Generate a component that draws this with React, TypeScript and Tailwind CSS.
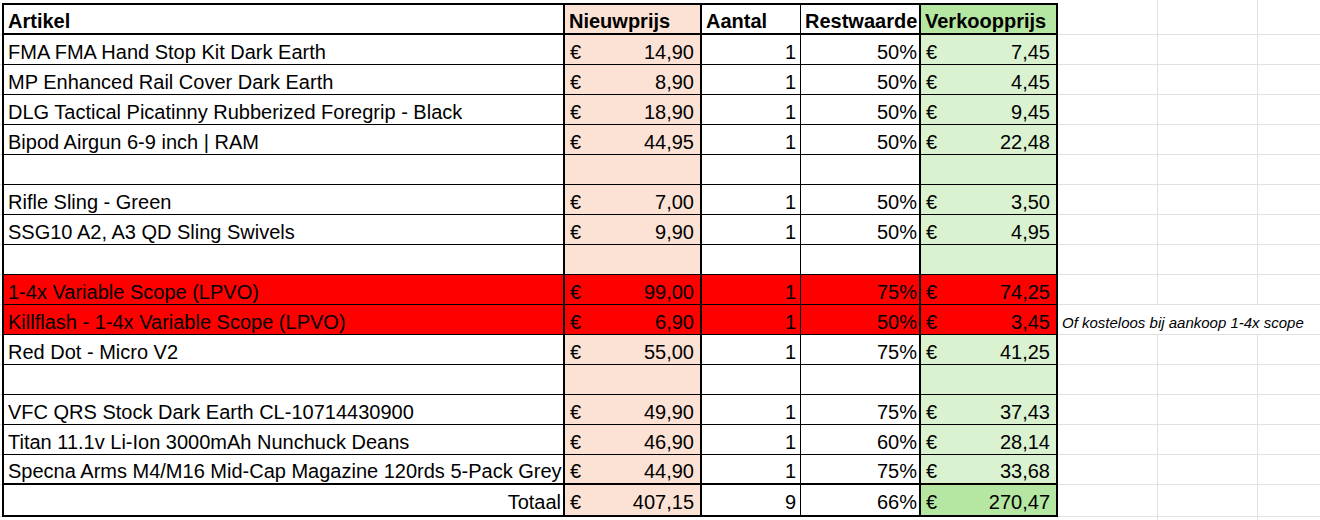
type Item = {
  name: string;
  price?: string;
  qty?: string;
  pct?: string;
  sale?: string;
  red?: boolean;
  note?: string;
};

const items: Item[] = [
  { name: 'FMA FMA Hand Stop Kit Dark Earth', price: '14,90', qty: '1', pct: '50%', sale: '7,45' },
  { name: 'MP Enhanced Rail Cover Dark Earth', price: '8,90', qty: '1', pct: '50%', sale: '4,45' },
  { name: 'DLG Tactical Picatinny Rubberized Foregrip - Black', price: '18,90', qty: '1', pct: '50%', sale: '9,45' },
  { name: 'Bipod Airgun 6-9 inch | RAM', price: '44,95', qty: '1', pct: '50%', sale: '22,48' },
  { name: '' },
  { name: 'Rifle Sling - Green', price: '7,00', qty: '1', pct: '50%', sale: '3,50' },
  { name: 'SSG10 A2, A3 QD Sling Swivels', price: '9,90', qty: '1', pct: '50%', sale: '4,95' },
  { name: '' },
  { name: '1-4x Variable Scope (LPVO)', price: '99,00', qty: '1', pct: '75%', sale: '74,25', red: true },
  {
    name: 'Killflash - 1-4x Variable Scope (LPVO)',
    price: '6,90',
    qty: '1',
    pct: '50%',
    sale: '3,45',
    red: true,
    note: 'Of kosteloos bij aankoop 1-4x scope',
  },
  { name: 'Red Dot - Micro V2', price: '55,00', qty: '1', pct: '75%', sale: '41,25' },
  { name: '' },
  { name: 'VFC QRS Stock Dark Earth CL-10714430900', price: '49,90', qty: '1', pct: '75%', sale: '37,43' },
  { name: 'Titan 11.1v Li-Ion 3000mAh Nunchuck Deans', price: '46,90', qty: '1', pct: '60%', sale: '28,14' },
  { name: 'Specna Arms M4/M16 Mid-Cap Magazine 120rds 5-Pack Grey', price: '44,90', qty: '1', pct: '75%', sale: '33,68' },
];

// excel gridline cells to the right of the table
function Grid({ note }: { note?: string }) {
  return (
    <>
      <div className="relative z-10 flex w-[100px] shrink-0 items-stretch overflow-visible border-b border-r border-[#e1e1e1]">
        {note && (
          <span className="flex items-center whitespace-nowrap bg-white pl-[4px] pr-[8px] pt-[5px] text-[15px] italic">
            {note}
          </span>
        )}
      </div>
      <div className="w-[100px] shrink-0 border-b border-r border-[#e1e1e1]" />
      <div className="flex-1 border-b border-[#e1e1e1]" />
    </>
  );
}

function Money({ v, bg, edge }: { v?: string; bg: string; edge: string }) {
  return (
    <div className={`flex w-[137px] shrink-0 items-center justify-between border-r-2 border-black pl-[5px] pr-[6px] pt-[4px] ${edge} ${bg}`}>
      {v && <span>€</span>}
      {v && <span>{v}</span>}
    </div>
  );
}

export default function App() {
  return (
    <div className="h-[520px] w-[1320px] overflow-hidden bg-white font-['Liberation_Sans',Arial,sans-serif] text-[20px] leading-none text-black">
      {/* strip above the table */}
      <div className="flex h-[3px]">
        <div className="w-[1058px] shrink-0" />
        <div className="w-[100px] shrink-0 border-r border-[#e1e1e1]" />
        <div className="w-[100px] shrink-0 border-r border-[#e1e1e1]" />
      </div>

      {/* header */}
      <div className="flex h-[32px] font-bold">
        <div className="w-[2px] shrink-0 border-b border-[#e1e1e1]" />
        <div className="flex w-[563px] shrink-0 items-center border-x-2 border-y-2 border-black pl-[4px] pt-[3px]">Artikel</div>
        <div className="flex w-[137px] shrink-0 items-center border-y-2 border-r-2 border-black bg-[#fbe2d5] pl-[4px] pt-[3px]">Nieuwprijs</div>
        <div className="flex w-[99px] shrink-0 items-center border-y-2 border-r border-black pl-[4px] pt-[3px]">Aantal</div>
        <div className="flex w-[120px] shrink-0 items-center border-y-2 border-r-2 border-black pl-[4px] pt-[3px]">Restwaarde</div>
        <div className="flex w-[137px] shrink-0 items-center border-y-2 border-r-2 border-black bg-[#b5e6a2] pl-[4px] pt-[3px]">Verkoopprijs</div>
        <Grid />
      </div>

      {items.map((it, i) => {
        const last = i === items.length - 1;
        const edge = last ? 'border-b-2' : 'border-b';
        const red = it.red ? 'bg-[#ff0000]' : '';
        return (
          <div key={i} className="flex h-[30px]">
            <div className="w-[2px] shrink-0 border-b border-[#e1e1e1]" />
            <div className={`flex w-[563px] shrink-0 items-center whitespace-nowrap border-x-2 border-black pl-[4px] pt-[4px] ${edge} ${red}`}>
              {it.name}
            </div>
            <Money v={it.price} edge={edge} bg={it.red ? 'bg-[#ff0000]' : 'bg-[#fbe2d5]'} />
            <div className={`flex w-[99px] shrink-0 items-center justify-end border-r border-black pr-[4px] pt-[4px] ${edge} ${red}`}>
              {it.qty}
            </div>
            <div className={`flex w-[120px] shrink-0 items-center justify-end border-r-2 border-black pr-[2px] pt-[4px] ${edge} ${red}`}>
              {it.pct}
            </div>
            <Money v={it.sale} edge={edge} bg={it.red ? 'bg-[#ff0000]' : 'bg-[#daf2d0]'} />
            <Grid note={it.note} />
          </div>
        );
      })}

      {/* totals */}
      <div className="flex h-[32px]">
        <div className="w-[2px] shrink-0 border-b border-[#e1e1e1]" />
        <div className="flex w-[563px] shrink-0 items-center justify-end border-x-2 border-b-2 border-black pr-[2px] pt-[4px]">Totaal</div>
        <Money v="407,15" edge="border-b-2" bg="bg-[#fbe2d5]" />
        <div className="flex w-[99px] shrink-0 items-center justify-end border-b-2 border-r border-black pr-[4px] pt-[4px]">9</div>
        <div className="flex w-[120px] shrink-0 items-center justify-end border-b-2 border-r-2 border-black pr-[2px] pt-[4px]">66%</div>
        <Money v="270,47" edge="border-b-2" bg="bg-[#b5e6a2]" />
        <Grid />
      </div>

      <div className="flex h-[10px]">
        <div className="w-[1058px] shrink-0" />
        <div className="w-[100px] shrink-0 border-r border-[#e1e1e1]" />
        <div className="w-[100px] shrink-0 border-r border-[#e1e1e1]" />
      </div>
    </div>
  );
}
